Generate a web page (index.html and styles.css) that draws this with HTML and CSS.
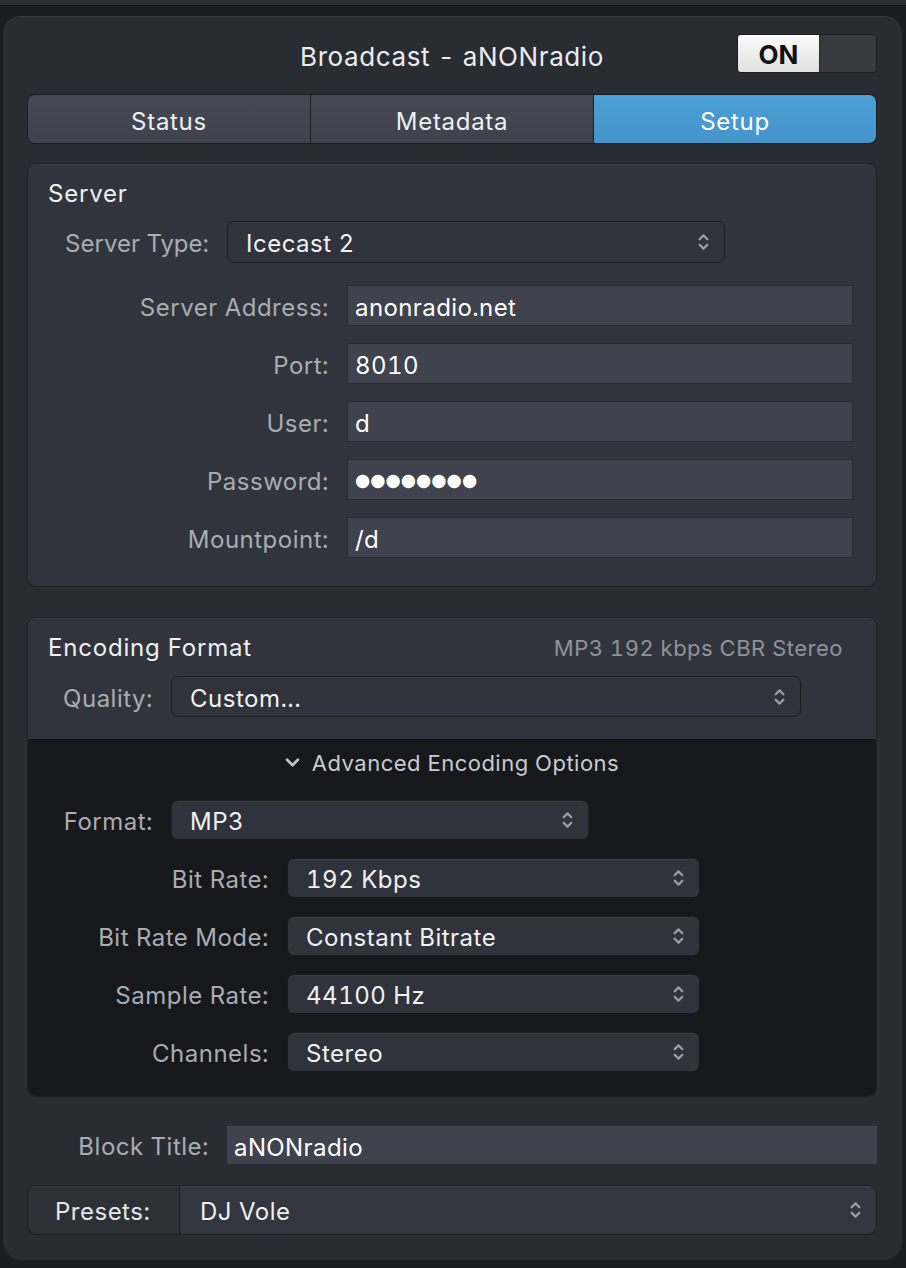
FILE: index.html
```html
<!DOCTYPE html>
<html>
<head>
<meta charset="utf-8">
<title>Broadcast - aNONradio</title>
<link rel="stylesheet" href="styles.css">
</head>
<body>
<div class="topstrip"></div>
<div class="panel">
  <header class="head">
    <div class="head-spacer"></div>
    <h1 class="title">Broadcast - aNONradio</h1>
    <div class="toggle"><span class="toggle-on">ON</span><span class="toggle-off"></span></div>
  </header>

  <nav class="tabs">
    <div class="tab">Status</div>
    <div class="tab">Metadata</div>
    <div class="tab tab-active">Setup</div>
  </nav>

  <section class="box box-server">
    <h2 class="box-title">Server</h2>
    <div class="row row-type">
      <span class="lbl lbl-type">Server Type:</span>
      <div class="select select-type"><span>Icecast 2</span><svg class="updown" viewBox="0 0 10 18"><path d="M1.5 6.5 L5 3 L8.5 6.5 M1.5 11.5 L5 15 L8.5 11.5"/></svg></div>
    </div>
    <div class="fields">
      <div class="row field"><span class="lbl lbl-field">Server Address:</span><div class="input">anonradio.net</div></div>
      <div class="row field"><span class="lbl lbl-field">Port:</span><div class="input">8010</div></div>
      <div class="row field"><span class="lbl lbl-field">User:</span><div class="input">d</div></div>
      <div class="row field"><span class="lbl lbl-field">Password:</span><div class="input input-pass">●●●●●●●●</div></div>
      <div class="row field"><span class="lbl lbl-field">Mountpoint:</span><div class="input">/d</div></div>
    </div>
  </section>

  <section class="box box-enc">
    <div class="enc-head">
      <div class="enc-title-row">
        <h2 class="box-title">Encoding Format</h2>
        <span class="summary">MP3 192 kbps CBR Stereo</span>
      </div>
      <div class="row row-quality">
        <span class="lbl lbl-q">Quality:</span>
        <div class="select select-quality"><span>Custom...</span><svg class="updown" viewBox="0 0 10 18"><path d="M1.5 6.5 L5 3 L8.5 6.5 M1.5 11.5 L5 15 L8.5 11.5"/></svg></div>
      </div>
    </div>
    <div class="adv">
      <div class="adv-toggle"><svg class="adv-chev" viewBox="0 0 14 10"><path d="M2 2.5 L7 7.5 L12 2.5"/></svg><span>Advanced Encoding Options</span></div>
      <div class="row row-format">
        <span class="lbl lbl-q">Format:</span>
        <div class="select select-format"><span>MP3</span><svg class="updown" viewBox="0 0 10 18"><path d="M1.5 6.5 L5 3 L8.5 6.5 M1.5 11.5 L5 15 L8.5 11.5"/></svg></div>
      </div>
      <div class="adv-rows">
        <div class="row row-adv"><span class="lbl lbl-adv">Bit Rate:</span><div class="select select-adv"><span>192 Kbps</span><svg class="updown" viewBox="0 0 10 18"><path d="M1.5 6.5 L5 3 L8.5 6.5 M1.5 11.5 L5 15 L8.5 11.5"/></svg></div></div>
        <div class="row row-adv"><span class="lbl lbl-adv">Bit Rate Mode:</span><div class="select select-adv"><span>Constant Bitrate</span><svg class="updown" viewBox="0 0 10 18"><path d="M1.5 6.5 L5 3 L8.5 6.5 M1.5 11.5 L5 15 L8.5 11.5"/></svg></div></div>
        <div class="row row-adv"><span class="lbl lbl-adv">Sample Rate:</span><div class="select select-adv"><span>44100 Hz</span><svg class="updown" viewBox="0 0 10 18"><path d="M1.5 6.5 L5 3 L8.5 6.5 M1.5 11.5 L5 15 L8.5 11.5"/></svg></div></div>
        <div class="row row-adv"><span class="lbl lbl-adv">Channels:</span><div class="select select-adv"><span>Stereo</span><svg class="updown" viewBox="0 0 10 18"><path d="M1.5 6.5 L5 3 L8.5 6.5 M1.5 11.5 L5 15 L8.5 11.5"/></svg></div></div>
      </div>
    </div>
  </section>

  <div class="row row-block">
    <span class="lbl lbl-block">Block Title:</span>
    <div class="input input-block">aNONradio</div>
  </div>

  <div class="presets">
    <div class="presets-lbl">Presets:</div>
    <div class="presets-val"><span>DJ Vole</span><svg class="updown" viewBox="0 0 10 18"><path d="M1.5 6.5 L5 3 L8.5 6.5 M1.5 11.5 L5 15 L8.5 11.5"/></svg></div>
  </div>
</div>
</body>
</html>
```

FILE: styles.css
```css
* { box-sizing: border-box; }

html, body {
  margin: 0;
  padding: 0;
}

body {
  width: 906px;
  height: 1268px;
  overflow: hidden;
  background: #1c1d21;
  font-family: Inter, "Noto Sans", "Liberation Sans", sans-serif;
  font-variant-numeric: tabular-nums;
  color: #eceef1;
}

.topstrip {
  height: 6px;
  background: #2d2f34;
  border-bottom: 1px solid #17181b;
}

.panel {
  margin: 10px 0 0 3px;
  width: 899px;
  height: 1244px;
  border-radius: 18px;
  background: #2a2c33;
  border-top: 1px solid #373940;
  padding: 0 25px 0 24px;
  display: flex;
  flex-direction: column;
}

/* header */
.head {
  display: grid;
  grid-template-columns: 1fr auto 1fr;
  align-items: center;
  padding-top: 17px;
  margin-bottom: 21px;
}

.title {
  margin: 0;
  padding-top: 6px;
  font-size: 26px;
  font-weight: 400;
  color: #ececee;
  letter-spacing: 0.6px;
  white-space: nowrap;
}

.toggle {
  justify-self: end;
  display: flex;
  width: 140px;
  height: 39px;
  border-radius: 4px;
  overflow: hidden;
  border: 1px solid #1b1c1f;
}

.toggle-on {
  width: 81px;
  background: linear-gradient(#fbfbfb, #e0e0e0);
  color: #111;
  font-weight: 700;
  font-size: 26px;
  padding-top: 2px;
  display: flex;
  align-items: center;
  justify-content: center;
}

.toggle-off {
  flex: 1;
  background: #393a3e;
  border-left: 1px solid #2a2b2e;
}

/* tabs */
.tabs {
  display: grid;
  grid-template-columns: 1fr 1fr 1fr;
  height: 50px;
  border-radius: 8px;
  overflow: hidden;
  border: 1px solid #1c1d21;
  background: #1c1d21;
  gap: 1px;
}

.tab {
  display: flex;
  align-items: center;
  justify-content: center;
  padding-top: 4px;
  background: linear-gradient(#454953, #3e424c);
  font-size: 24px;
  letter-spacing: 0.7px;
  color: #eef0f2;
}

.tab-active {
  background: linear-gradient(#4c9fd4, #4494ca);
  color: #ffffff;
}

/* boxes */
.box {
  border: 1px solid #1e2025;
  border-radius: 9px;
  background: #31343d;
  box-shadow: inset 0 1px 0 #3b3e47;
}

.box-title {
  margin: 0;
  font-size: 24px;
  line-height: 30px;
  font-weight: 400;
  letter-spacing: 0.8px;
  color: #eef0f2;
}

.box-server {
  margin-top: 19px;
  height: 424px;
  padding: 15px 0 0 20px;
}

.row {
  display: flex;
  align-items: center;
  gap: 18px;
}

.lbl {
  text-align: right;
  font-size: 24px;
  letter-spacing: 0.5px;
  padding-top: 3px;
  color: #a9acb3;
  white-space: nowrap;
  flex: none;
}

.row-type {
  margin-top: 12px;
  height: 42px;
}

.lbl-type {
  width: 161px;
  letter-spacing: 0;
}

.select {
  display: flex;
  align-items: center;
  justify-content: space-between;
  height: 100%;
  padding: 3px 15px 0 18px;
  border: 1px solid #1a1b1f;
  border-radius: 7px;
  background: #30333b;
  box-shadow: inset 0 1px 0 #3a3d45;
  font-size: 24px;
  letter-spacing: 0.5px;
  color: #f0f1f3;
}

.updown {
  width: 11px;
  height: 20px;
  flex: none;
  margin-top: -3px;
}

.updown path {
  fill: none;
  stroke: #9c9fa6;
  stroke-width: 2;
  stroke-linecap: round;
  stroke-linejoin: round;
}

.select-type { width: 498px; }

.fields {
  margin-top: 22px;
  display: flex;
  flex-direction: column;
  gap: 17px;
}

.field { height: 41px; }

.lbl-field { width: 281px; }

.input {
  height: 100%;
  width: 506px;
  display: flex;
  align-items: center;
  padding: 3px 0 0 7px;
  background: #40434d;
  border: 1px solid #292b31;
  font-size: 24px;
  letter-spacing: 0.4px;
  color: #ffffff;
}

.input-pass {
  font-family: "DejaVu Sans", sans-serif;
  font-size: 17.5px;
  letter-spacing: 0;
  padding-top: 0;
}

/* encoding */
.box-enc {
  margin-top: 30px;
  height: 480px;
  overflow: hidden;
  display: flex;
  flex-direction: column;
}

.enc-head {
  height: 121px;
  padding: 15px 0 0 20px;
  flex: none;
}

.enc-title-row {
  display: flex;
  justify-content: space-between;
  align-items: center;
  padding-right: 33px;
}

.summary {
  font-size: 22px;
  letter-spacing: 0.5px;
  color: #8f929a;
}

.row-quality {
  margin-top: 13px;
  height: 41px;
}

.lbl-q { width: 105px; }

.select-quality { width: 630px; }

.adv {
  flex: 1;
  background: #16181c;
  border-top: 1px solid #111215;
  padding: 8px 0 0 20px;
}

.adv-toggle {
  display: flex;
  align-items: center;
  justify-content: center;
  gap: 12px;
  height: 30px;
  margin-left: -20px;
  font-size: 22px;
  letter-spacing: 0.5px;
  color: #c9cbd0;
}

.adv-chev {
  width: 15px;
  height: 11px;
  margin-top: -2px;
}

.adv-chev path {
  fill: none;
  stroke: #c0c2c7;
  stroke-width: 2.6;
  stroke-linecap: round;
  stroke-linejoin: round;
}

.row-format {
  margin-top: 22px;
  height: 40px;
}

.select-format { width: 418px; }

.adv-rows {
  margin-top: 18px;
  display: flex;
  flex-direction: column;
  gap: 18px;
}

.row-adv { height: 40px; }

.lbl-adv { width: 221px; }

.select-adv { width: 413px; }

/* block title */
.row-block {
  margin-top: 29px;
  height: 38px;
}

.lbl-block { width: 182px; }

.input-block {
  flex: 1;
  width: auto;
  border: none;
  padding-top: 4px;
  background: #40434d;
}

/* presets */
.presets {
  margin-top: 21px;
  height: 50px;
  display: flex;
  border: 1px solid #1b1c20;
  border-radius: 9px;
  overflow: hidden;
  box-shadow: inset 0 1px 0 #3b3e46;
}

.presets-lbl {
  width: 152px;
  flex: none;
  display: flex;
  align-items: center;
  padding: 3px 0 0 27px;
  background: #2d3037;
  border-right: 1px solid #1b1c20;
  font-size: 24px;
  letter-spacing: 0.5px;
  color: #e6e7ea;
  box-shadow: inset 0 1px 0 #3a3c44;
}

.presets-val {
  flex: 1;
  display: flex;
  align-items: center;
  justify-content: space-between;
  padding: 3px 15px 0 20px;
  background: #33363e;
  box-shadow: inset 0 1px 0 #41444c;
  font-size: 24px;
  letter-spacing: 0.5px;
  color: #eef0f2;
}
```
